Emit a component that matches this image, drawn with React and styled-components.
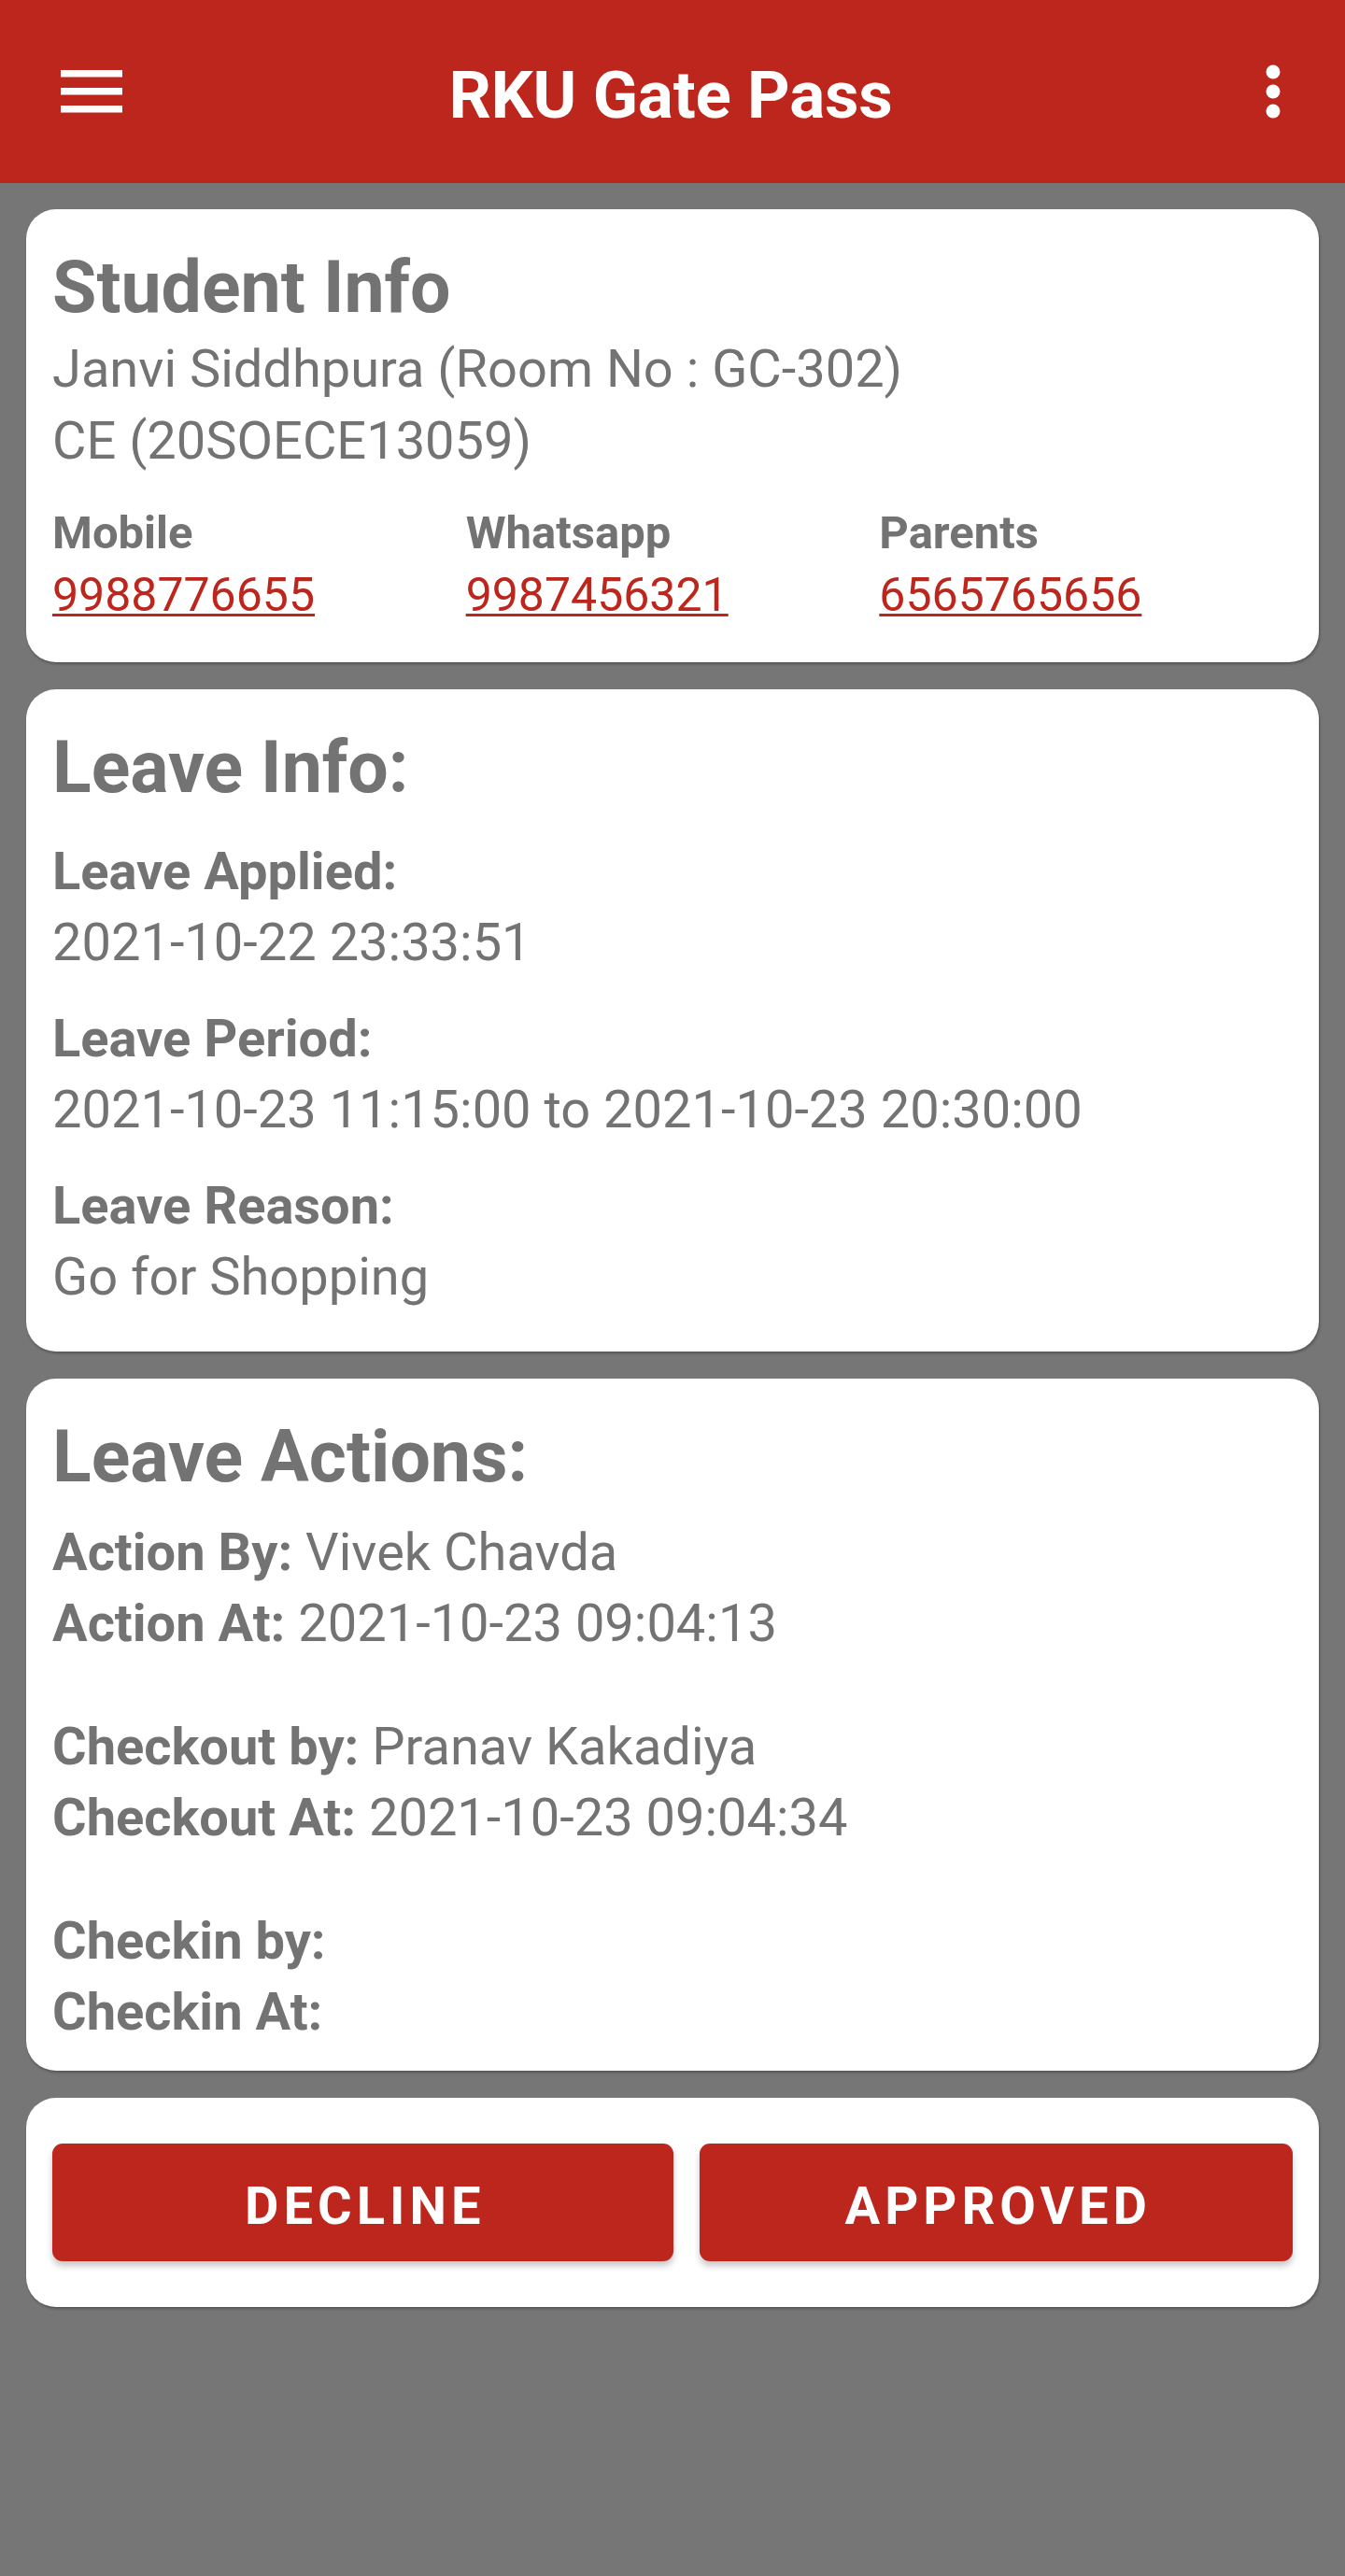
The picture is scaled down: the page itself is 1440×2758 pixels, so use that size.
import React from "react";
import styled, { createGlobalStyle } from "styled-components";

const RED = "#bd261d";
const GRAY_BG = "#767676";
const TEXT = "#737373";

const GlobalStyle = createGlobalStyle`
  html, body {
    margin: 0;
    padding: 0;
    background: ${GRAY_BG};
  }
  body {
    font-family: Roboto, "Noto Sans", "Liberation Sans", sans-serif;
    -webkit-font-smoothing: antialiased;
  }
  * { box-sizing: border-box; }
`;

const Screen = styled.div`
  min-height: 2758px;
  background: ${GRAY_BG};
  display: flex;
  flex-direction: column;
`;

const AppBar = styled.header`
  height: 196px;
  background: ${RED};
  display: grid;
  grid-template-columns: 1fr auto 1fr;
  align-items: center;
  padding: 0 69px 0 65px;
`;

const IconButton = styled.button`
  border: 0;
  background: transparent;
  padding: 0;
  display: flex;
  align-items: center;
  justify-self: ${(p) => (p.$end ? "end" : "start")};
  cursor: pointer;
`;

const BarTitle = styled.h1`
  margin: 0;
  padding-top: 7px;
  color: #fff;
  font-size: 71px;
  font-weight: 700;
  letter-spacing: -0.2px;
  white-space: nowrap;
`;

const Content = styled.main`
  display: flex;
  flex-direction: column;
  gap: 29px;
  padding: 28px 28px;
`;

const Card = styled.section`
  background: #fff;
  border-radius: 32px;
  padding: ${(p) => p.$pt}px 28px ${(p) => p.$pb}px;
  box-shadow: 1px 2px 3px rgba(0, 0, 0, 0.28);
  color: ${TEXT};
`;

const CardTitle = styled.h2`
  margin: 0 0 ${(p) => p.$mb || 0}px;
  font-size: 77px;
  line-height: 92px;
  font-weight: 700;
  color: ${TEXT};
`;

const BodyLine = styled.div`
  font-size: 56px;
  line-height: 77px;
  font-weight: 400;
  margin-top: ${(p) => p.$mt || 0}px;
`;

const ContactGrid = styled.div`
  display: grid;
  grid-template-columns: repeat(3, 1fr);
  margin-top: 27px;
`;

const Contact = styled.div`
  display: flex;
  flex-direction: column;
  font-size: 49px;
  line-height: 66px;
`;

const ContactLabel = styled.span`
  font-weight: 700;
`;

const ContactLink = styled.a`
  color: ${RED};
  font-size: 50px;
  text-decoration: underline;
  text-decoration-thickness: 3px;
  text-underline-offset: 3px;
  align-self: flex-start;
`;

const InfoGroup = styled.div`
  margin-top: ${(p) => p.$mt}px;
  display: flex;
  flex-direction: column;
`;

const Label = styled.div`
  font-size: 56px;
  line-height: 76px;
  font-weight: 700;
`;

const Value = styled.div`
  font-size: 56px;
  line-height: 76px;
  font-weight: 400;
`;

const Strong = styled.b`
  font-weight: 700;
`;

const ButtonRow = styled.div`
  display: grid;
  grid-template-columns: 664fr 635fr;
  gap: 28px;
`;

const ActionButton = styled.button`
  height: 126px;
  border: 0;
  border-radius: 11px;
  background: ${RED};
  color: #fff;
  font-family: Roboto, "Noto Sans", "Liberation Sans", sans-serif;
  font-size: 56px;
  font-weight: 700;
  letter-spacing: 0.09em;
  text-transform: uppercase;
  display: flex;
  align-items: center;
  justify-content: center;
  padding: 8px 0 0 0.09em;
  box-shadow: 0 5px 7px rgba(0, 0, 0, 0.22);
  cursor: pointer;
`;

const MenuIcon = () => (
  <svg width="66" height="46" viewBox="0 0 66 46" aria-hidden="true">
    <rect x="0" y="0" width="66" height="7.5" fill="#fff" />
    <rect x="0" y="19" width="66" height="7.5" fill="#fff" />
    <rect x="0" y="38" width="66" height="7.5" fill="#fff" />
  </svg>
);

const MoreIcon = () => (
  <svg width="16" height="58" viewBox="0 0 16 58" aria-hidden="true">
    <circle cx="8" cy="8" r="7.5" fill="#fff" />
    <circle cx="8" cy="29" r="7.5" fill="#fff" />
    <circle cx="8" cy="50" r="7.5" fill="#fff" />
  </svg>
);

const contacts = [
  { label: "Mobile", value: "9988776655" },
  { label: "Whatsapp", value: "9987456321" },
  { label: "Parents", value: "6565765656" },
];

const leaveInfo = [
  { label: "Leave Applied:", value: "2021-10-22 23:33:51" },
  { label: "Leave Period:", value: "2021-10-23 11:15:00 to 2021-10-23 20:30:00" },
  { label: "Leave Reason:", value: "Go for Shopping" },
];

const actions = [
  [
    { label: "Action By:", value: "Vivek Chavda" },
    { label: "Action At:", value: "2021-10-23 09:04:13" },
  ],
  [
    { label: "Checkout by:", value: "Pranav Kakadiya" },
    { label: "Checkout At:", value: "2021-10-23 09:04:34" },
  ],
  [
    { label: "Checkin by:", value: "" },
    { label: "Checkin At:", value: "" },
  ],
];

export default function App() {
  return (
    <>
      <GlobalStyle />
      <Screen>
        <AppBar>
          <IconButton aria-label="menu">
            <MenuIcon />
          </IconButton>
          <BarTitle>RKU Gate Pass</BarTitle>
          <IconButton $end aria-label="more">
            <MoreIcon />
          </IconButton>
        </AppBar>

        <Content>
          <Card $pt={38} $pb={39}>
            <CardTitle>Student Info</CardTitle>
            <BodyLine $mt={3}>Janvi Siddhpura (Room No : GC-302)</BodyLine>
            <BodyLine>CE (20SOECE13059)</BodyLine>
            <ContactGrid>
              {contacts.map((c) => (
                <Contact key={c.label}>
                  <ContactLabel>{c.label}</ContactLabel>
                  <ContactLink href={`tel:${c.value}`}>{c.value}</ContactLink>
                </Contact>
              ))}
            </ContactGrid>
          </Card>

          <Card $pt={38} $pb={42}>
            <CardTitle $mb={11}>Leave Info:</CardTitle>
            {leaveInfo.map((item) => (
              <InfoGroup key={item.label} $mt={27}>
                <Label>{item.label}</Label>
                <Value>{item.value}</Value>
              </InfoGroup>
            ))}
          </Card>

          <Card $pt={38} $pb={25}>
            <CardTitle>Leave Actions:</CardTitle>
            {actions.map((group, i) => (
              <InfoGroup key={i} $mt={i === 0 ? 18 : 56}>
                {group.map((row) => (
                  <Value key={row.label}>
                    <Strong>{row.label}</Strong>
                    {row.value ? ` ${row.value}` : ""}
                  </Value>
                ))}
              </InfoGroup>
            ))}
          </Card>

          <Card $pt={49} $pb={49}>
            <ButtonRow>
              <ActionButton>Decline</ActionButton>
              <ActionButton>Approved</ActionButton>
            </ButtonRow>
          </Card>
        </Content>
      </Screen>
    </>
  );
}
